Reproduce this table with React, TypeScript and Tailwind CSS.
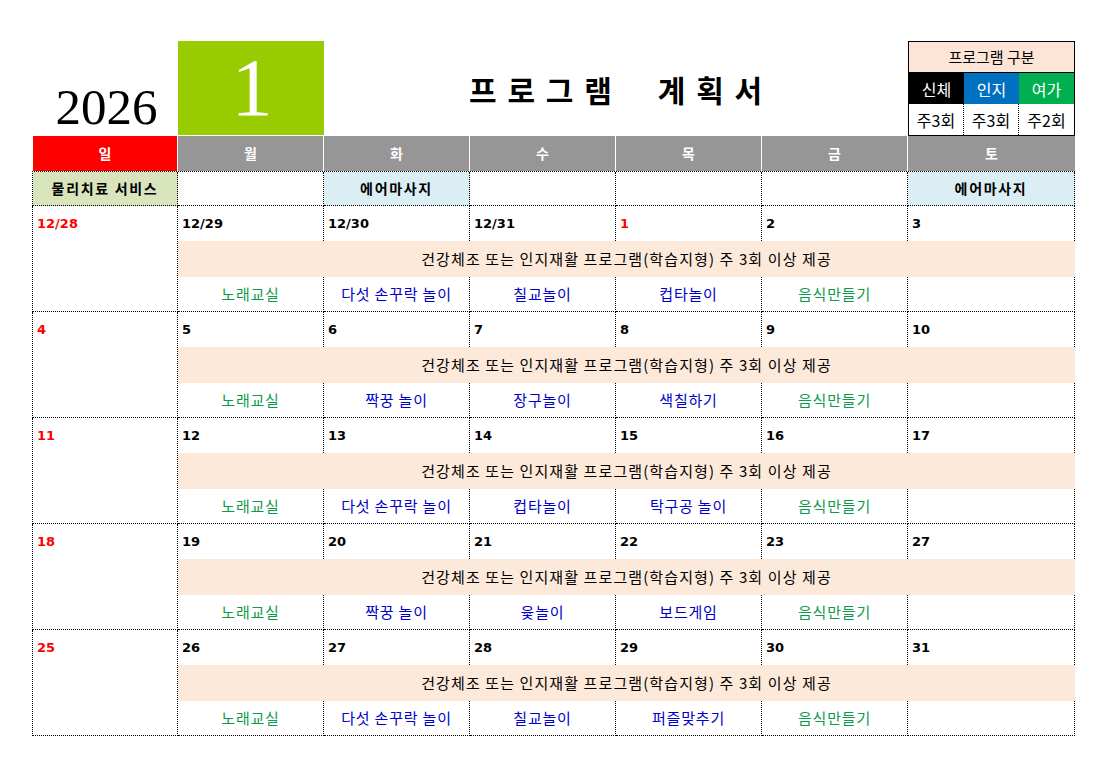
import React from "react";

const KR = { fontFamily: '"Noto Sans CJK KR", "Noto Sans", sans-serif' };
const NUM = { fontFamily: '"DejaVu Sans", "Noto Sans CJK KR", sans-serif' };

type Act = { t: string; c: "g" | "b" } | null;

const weeks: { dates: string[]; acts: Act[] }[] = [
  {
    dates: ["12/28", "12/29", "12/30", "12/31", "1", "2", "3"],
    acts: [
      { t: "노래교실", c: "g" },
      { t: "다섯 손꾸락 놀이", c: "b" },
      { t: "칠교놀이", c: "b" },
      { t: "컵타놀이", c: "b" },
      { t: "음식만들기", c: "g" },
      null,
    ],
  },
  {
    dates: ["4", "5", "6", "7", "8", "9", "10"],
    acts: [
      { t: "노래교실", c: "g" },
      { t: "짝꿍 놀이", c: "b" },
      { t: "장구놀이", c: "b" },
      { t: "색칠하기", c: "b" },
      { t: "음식만들기", c: "g" },
      null,
    ],
  },
  {
    dates: ["11", "12", "13", "14", "15", "16", "17"],
    acts: [
      { t: "노래교실", c: "g" },
      { t: "다섯 손꾸락 놀이", c: "b" },
      { t: "컵타놀이", c: "b" },
      { t: "탁구공 놀이", c: "b" },
      { t: "음식만들기", c: "g" },
      null,
    ],
  },
  {
    dates: ["18", "19", "20", "21", "22", "23", "27"],
    acts: [
      { t: "노래교실", c: "g" },
      { t: "짝꿍 놀이", c: "b" },
      { t: "윷놀이", c: "b" },
      { t: "보드게임", c: "b" },
      { t: "음식만들기", c: "g" },
      null,
    ],
  },
  {
    dates: ["25", "26", "27", "28", "29", "30", "31"],
    acts: [
      { t: "노래교실", c: "g" },
      { t: "다섯 손꾸락 놀이", c: "b" },
      { t: "칠교놀이", c: "b" },
      { t: "퍼즐맞추기", c: "b" },
      { t: "음식만들기", c: "g" },
      null,
    ],
  },
];

const COLS = "grid grid-cols-[145px_146px_146px_146px_146px_146px_167px]";
const days = ["일", "월", "화", "수", "목", "금", "토"];

export default function App() {
  return (
    <div className="w-[1112px] h-[779px] bg-white pl-[32px] pt-[41px]" style={KR}>
      <div className="w-[1043px]">
        {/* Top header */}
        <div className={`${COLS} h-[95px] pl-px`}>
          <div className="flex items-end justify-center pb-[3px] pl-[2px]">
            <span
              className="text-[51px] leading-none text-black"
              style={{ fontFamily: '"Liberation Serif", "DejaVu Serif", serif' }}
            >
              2026
            </span>
          </div>
          <div className="bg-[#99cc00] flex items-center justify-center h-[94px]">
            <span
              className="text-[82px] leading-none text-white pl-[2px]"
              style={{ fontFamily: '"Liberation Serif", "DejaVu Serif", serif' }}
            >
              1
            </span>
          </div>
          <div className="col-span-4 flex items-center justify-center pt-[2px] pl-[10px]">
            <span className="text-[30px] font-bold text-black tracking-[0.36em]">
              프로그램&nbsp;&nbsp;계획서
            </span>
          </div>
          <div className="border border-black flex flex-col h-[95px]">
            <div className="h-[31px] bg-[#fce4d6] flex items-center justify-center text-[15px] text-black border-b border-black">
              프로그램 구분
            </div>
            <div className="h-[31px] grid grid-cols-3 text-[16px] text-white">
              <div className="bg-black flex items-center justify-center">신체</div>
              <div className="bg-[#0070c0] flex items-center justify-center">인지</div>
              <div className="bg-[#00b050] flex items-center justify-center">여가</div>
            </div>
            <div className="flex-1 grid grid-cols-3 text-[16px] text-black">
              <div className="flex items-center justify-center border-r border-dotted border-black">주3회</div>
              <div className="flex items-center justify-center border-r border-dotted border-black">주3회</div>
              <div className="flex items-center justify-center">주2회</div>
            </div>
          </div>
        </div>

        {/* Day header */}
        <div className={`${COLS} h-[35px] pl-px`}>
          {days.map((d, i) => (
            <div
              key={d}
              className={`flex items-center justify-center text-[14px] font-bold text-white ${
                i === 0 ? "bg-[#ff0000]" : "bg-[#969696]"
              } ${i < 6 ? "border-r border-white" : ""}`}
            >
              {d}
            </div>
          ))}
        </div>

        {/* Service row */}
        <div className={`${COLS} h-[35px] border-t border-l border-dotted border-black`}>
          <div className="bg-[#d8e4bc] flex items-center justify-center text-[14px] font-bold text-black tracking-[0.12em] border-r border-b border-dotted border-black">
            물리치료 서비스
          </div>
          <div className="border-r border-b border-dotted border-black" />
          <div className="bg-[#daeef3] flex items-center justify-center text-[14px] font-bold text-black tracking-[0.12em] border-r border-b border-dotted border-black">
            에어마사지
          </div>
          <div className="border-r border-b border-dotted border-black" />
          <div className="border-r border-b border-dotted border-black" />
          <div className="border-r border-b border-dotted border-black" />
          <div className="bg-[#daeef3] flex items-center justify-center text-[14px] font-bold text-black tracking-[0.12em] border-r border-b border-dotted border-black">
            에어마사지
          </div>
        </div>

        {/* Weeks */}
        {weeks.map((w, wi) => (
          <div key={wi} className={`${COLS} grid-rows-[35px_36px_35px] border-l border-dotted border-black`}>
            <div className="row-span-3 border-r border-b border-dotted border-black pl-[4px]">
              <div className="h-[35px] flex items-center">
                <span className="text-[13px] font-bold text-[#ff0000]" style={NUM}>
                  {w.dates[0]}
                </span>
              </div>
            </div>
            {w.dates.slice(1).map((d, di) => (
              <div key={di} className="border-r border-dotted border-black pl-[4px] flex items-center">
                <span
                  className={`text-[13px] font-bold ${wi === 0 && di === 3 ? "text-[#ff0000]" : "text-black"}`}
                  style={NUM}
                >
                  {d}
                </span>
              </div>
            ))}
            <div className="col-span-6 bg-[#fde9d9] flex items-center justify-center text-[15px] text-black tracking-[1.1px]">
              건강체조 또는 인지재활 프로그램(학습지형) 주 3회 이상 제공
            </div>
            {w.acts.map((a, ai) => (
              <div
                key={ai}
                className="border-r border-b border-dotted border-black flex items-center justify-center text-[15px] tracking-[0.8px]"
              >
                {a && (
                  <span className={a.c === "g" ? "text-[#0e9a4a]" : "text-[#0000c8]"}>{a.t}</span>
                )}
              </div>
            ))}
          </div>
        ))}
      </div>
    </div>
  );
}
